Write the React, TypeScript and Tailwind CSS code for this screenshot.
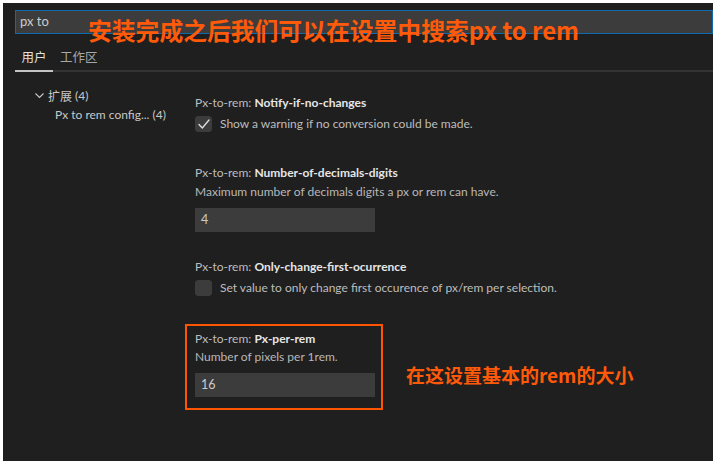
import React from "react";

const ui = { fontFamily: 'Lato, "Noto Sans CJK SC", sans-serif' };
const cjk = { fontFamily: '"Noto Sans CJK SC", "Noto Sans", sans-serif' };

function Check({ checked }: { checked?: boolean }) {
  return (
    <div className="w-[17px] h-[16px] rounded-[3px] bg-[#3c3c3c] border border-[#3c3c3c] flex items-center justify-center shrink-0">
      {checked && (
        <svg width="14" height="14" viewBox="0 0 14 14" fill="none">
          <path d="M2 7.5 L5.3 11 L12 3" stroke="#e0e0e0" strokeWidth="1.3" strokeLinecap="round" strokeLinejoin="round" />
        </svg>
      )}
    </div>
  );
}

function Label({ name }: { name: string }) {
  return (
    <div className="h-[18px] leading-[18px] text-[12px] text-[#bdbdbd] whitespace-nowrap">
      Px-to-rem: <span className="font-bold text-[#e6e6e6]">{name}</span>
    </div>
  );
}

function Desc({ children }: { children: React.ReactNode }) {
  return <div className="h-[18px] leading-[18px] text-[12px] text-[#b8b8b8] whitespace-nowrap">{children}</div>;
}

function Input({ value }: { value: string }) {
  return (
    <div className="w-[180px] h-[24px] bg-[#3c3c3c] flex items-center pl-[6px] text-[12.5px] text-[#cccccc]">{value}</div>
  );
}

export default function App() {
  return (
    <div className="w-[713px] h-[461px] bg-white pt-[3px] pl-[3px] overflow-hidden" style={ui}>
      <div className="relative w-[710px] h-[458px] bg-[#1f1f1f] overflow-hidden">
        {/* search */}
        <div className="mt-[7px] ml-[12px] h-[24px] border border-[#0e6aad] bg-[#3c3c3c] flex items-center pl-[4px] text-[13px] text-[#cccccc]">
          px to
        </div>
        {/* tabs */}
        <div className="ml-[12px] mt-[11px] flex h-[25px] items-end text-[12.5px]" style={cjk}>
          <div className="w-[38px] h-[25px] flex items-center justify-center text-[#e0e0e0]">用户</div>
          <div className="h-[25px] flex items-center pl-[7px] text-[#a8a8a8]">工作区</div>
        </div>
        <div className="ml-[12px] h-[2px] bg-[#333333] relative">
          <div className="absolute left-0 top-0 w-[38px] h-[2px] bg-[#c4c4c4]" />
        </div>
        {/* body */}
        <div className="flex">
          <div className="ml-[12px] w-[180px] pt-[14px] text-[12px] text-[#c8c8c8]">
            <div className="h-[19px] flex items-center pl-[19px] whitespace-nowrap">
              <svg width="11" height="11" viewBox="0 0 11 11" fill="none" className="mr-[3px]">
                <path d="M1.5 3.5 L5.5 7.5 L9.5 3.5" stroke="#c8c8c8" strokeWidth="1.1" />
              </svg>
              <span style={cjk}>扩展</span>
              <span className="ml-[3px]">(4)</span>
            </div>
            <div className="h-[19px] flex items-center pl-[40px] whitespace-nowrap">Px to rem config... (4)</div>
          </div>
          <div className="pt-[22px]">
            <Label name="Notify-if-no-changes" />
            <div className="mt-[3px] flex items-center h-[17px]">
              <Check checked />
              <span className="ml-[8px] text-[12px] text-[#bdbdbd] whitespace-nowrap">Show a warning if no conversion could be made.</span>
            </div>

            <div className="mt-[32px]">
              <Label name="Number-of-decimals-digits" />
              <div className="mt-[1px]">
                <Desc>Maximum number of decimals digits a px or rem can have.</Desc>
              </div>
              <div className="mt-[7px]">
                <Input value="4" />
              </div>
            </div>

            <div className="mt-[26px]">
              <Label name="Only-change-first-ocurrence" />
              <div className="mt-[3px] flex items-center h-[17px]">
                <Check />
                <span className="ml-[8px] text-[12px] text-[#bdbdbd] whitespace-nowrap">
                  Set value to only change first occurence of px/rem per selection.
                </span>
              </div>
            </div>

            <div className="mt-[28px] -ml-[10px] w-[198px] border-2 border-[#ff5500] pl-[8px] pt-[4px] pb-[11px]">
              <Label name="Px-per-rem" />
              <Desc>Number of pixels per 1rem.</Desc>
              <div className="mt-[7px]">
                <Input value="16" />
              </div>
            </div>
          </div>
        </div>

        {/* annotations */}
        <div
          className="absolute left-[85px] top-[12px] text-[23.8px] leading-[30px] font-bold text-[#ff5a0a] whitespace-nowrap"
          style={{ fontFamily: '"Noto Sans CJK SC", sans-serif' }}
        >
          安装完成之后我们可以在设置中搜索px to rem
        </div>
        <div
          className="absolute left-[403px] top-[359px] text-[19px] leading-[26px] font-bold text-[#ff5a0a] whitespace-nowrap"
          style={{ fontFamily: '"Noto Sans CJK SC", sans-serif' }}
        >
          在这设置基本的rem的大小
        </div>
      </div>
    </div>
  );
}
